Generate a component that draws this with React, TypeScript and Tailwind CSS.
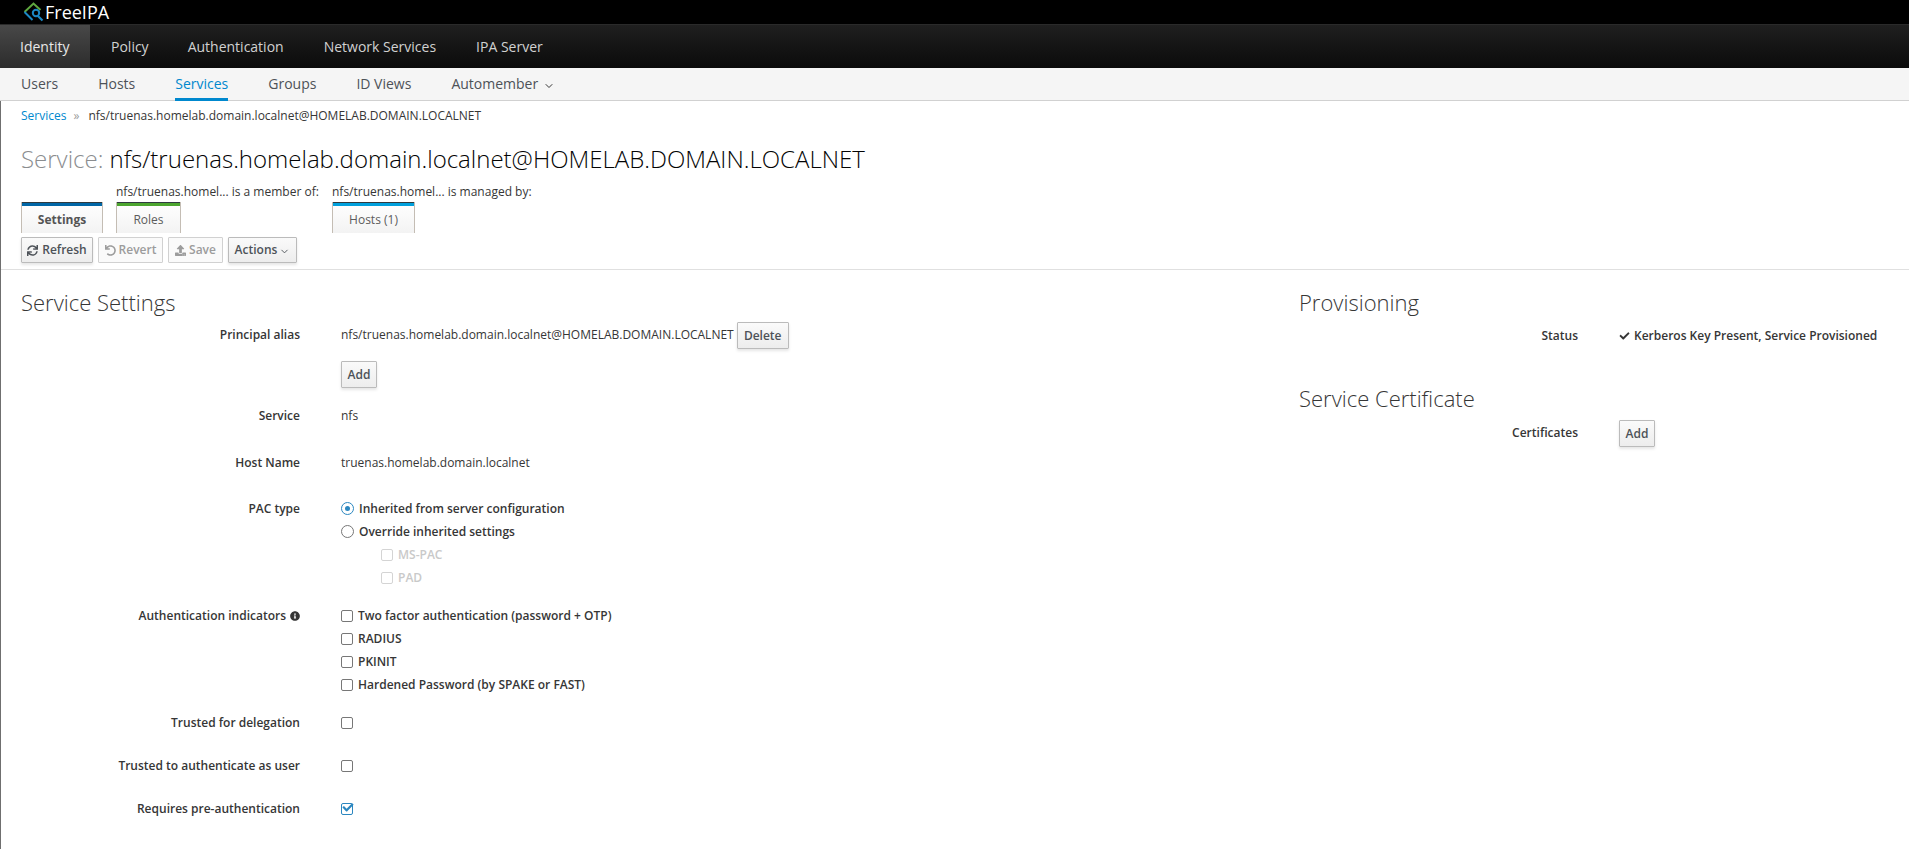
import React from 'react';
import { ChevronDown } from 'lucide-react';
import { FaCheck, FaInfoCircle, FaSync, FaUndo, FaUpload } from 'react-icons/fa';

const Logo = () => (
  <svg width="23" height="20" viewBox="0 0 23 20" fill="none" className="shrink-0">
    <path d="M1.5 10 L10.5 1.5 L17.5 8" stroke="#5fa83f" strokeWidth="2" />
    <path d="M1.5 10 L9.5 18" stroke="#1b87c4" strokeWidth="2" />
    <circle cx="13" cy="11" r="3.2" stroke="#1b87c4" strokeWidth="2" />
    <path d="M14.5 13.5 L19.5 18.5" stroke="#1b87c4" strokeWidth="2.2" />
  </svg>
);

const Btn = ({ children, disabled, className = '' }: { children: React.ReactNode; disabled?: boolean; className?: string }) => (
  <div
    className={`flex items-center justify-center rounded-[1px] border text-xs font-semibold ${
      disabled
        ? 'border-[#d1d1d1] bg-[#fafafa] text-[#9c9c9c]'
        : 'border-[#bbbbbb] bg-gradient-to-b from-[#fafafa] to-[#ededed] text-[#4d5258] shadow-[0_2px_3px_rgba(3,3,3,0.1)]'
    } ${className}`}
  >
    {children}
  </div>
);

const Tab = ({ label, bar, bold, className = '' }: { label: string; bar: string; bold?: boolean; className?: string }) => (
  <div className={`flex h-[31px] flex-col border-x border-[#c4bdb4] bg-gradient-to-b from-white to-[#f3f3f3] ${className}`}>
    <div className={`h-1 border-t border-[#2f3a3f] ${bar}`} />
    <div className={`flex flex-1 items-center justify-center text-xs ${bold ? 'font-bold text-[#545454]' : 'text-[#5c5c5c]'}`}>{label}</div>
  </div>
);

const Row = ({ label, children, className = '' }: { label: React.ReactNode; children: React.ReactNode; className?: string }) => (
  <div className={`flex items-start ${className}`}>
    <div className="w-[279px] shrink-0 pt-[4px] text-right text-xs font-semibold leading-[18px] text-[#363636]">{label}</div>
    <div className="ml-[41px] min-w-0">{children}</div>
  </div>
);

const Box = ({ faded }: { faded?: boolean }) => (
  <span className={`box-border block h-3 w-3 shrink-0 rounded-[2px] border ${faded ? 'border-[#d4d4d4]' : 'border-[#777777]'}`} />
);

const CheckLine = ({ label, faded }: { label: string; faded?: boolean }) => (
  <div className={`flex h-[23px] items-center gap-[5px] text-xs font-semibold ${faded ? 'text-[#c9c9c9]' : 'text-[#363636]'}`}>
    <Box faded={faded} />
    {label}
  </div>
);

const Radio = ({ label, on }: { label: string; on?: boolean }) => (
  <div className="flex h-[23px] items-center gap-[5px] text-xs font-semibold text-[#363636]">
    <span className={`flex h-[13px] w-[13px] items-center justify-center rounded-full border ${on ? 'border-[#2b87c0]' : 'border-[#777777]'}`}>
      {on && <span className="h-[5px] w-[5px] rounded-full bg-[#2b87c0]" />}
    </span>
    {label}
  </div>
);

const topNav = [
  { label: 'Identity', cls: 'w-[90px] px-5 bg-gradient-to-b from-[#484848] to-[#2c2c2c] text-[#e8e8e8]' },
  { label: 'Policy', cls: 'pl-[21px] pr-[19px] text-[#d1d1d1]' },
  { label: 'Authentication', cls: 'px-5 text-[#d1d1d1]' },
  { label: 'Network Services', cls: 'px-5 text-[#d1d1d1]' },
  { label: 'IPA Server', cls: 'px-5 text-[#d1d1d1]' },
];
const subNav = ['Users', 'Hosts', 'Services', 'Groups', 'ID Views'];

export default function App() {
  return (
    <div className="h-[849px] w-full overflow-hidden bg-white font-['Open_Sans',sans-serif] text-[#363636]">
      <div className="flex h-6 items-center bg-black pl-[23px]">
        <Logo />
        <span className="-ml-px text-[18px] leading-none text-white">FreeIPA</span>
      </div>

      <div className="flex h-11 border-t border-[#2a2a2a] bg-gradient-to-b from-[#1f1f1f] to-[#0b0b0b] text-sm">
        {topNav.map((item) => (
          <div key={item.label} className={`flex items-center ${item.cls}`}>
            {item.label}
          </div>
        ))}
      </div>

      <div className="flex h-[33px] border-b border-[#d1d1d1] bg-[#f5f5f5] pl-px text-sm text-[#4d5258]">
        {subNav.map((item) => (
          <div
            key={item}
            className={`flex items-center px-5 ${item === 'Services' ? 'relative text-[#0088ce]' : ''}`}
          >
            {item}
            {item === 'Services' && <span className="absolute inset-x-5 -bottom-px h-[3px] bg-[#0088ce]" />}
          </div>
        ))}
        <div className="flex items-center gap-[5px] px-5">
          Automember
          <ChevronDown className="mt-[3px] h-3 w-3 text-[#363636]" strokeWidth={2} />
        </div>
      </div>

      <div className="h-[748px] border-l border-[#6f6f6f]">
        <div className="flex h-[29px] items-center pl-5 text-xs">
          <span className="text-[#0088ce]">Services</span>
          <span className="ml-[7px] text-[#9c9c9c]">»</span>
          <span className="ml-[9px] text-[#363636]">nfs/truenas.homelab.domain.localnet@HOMELAB.DOMAIN.LOCALNET</span>
        </div>

        <div className="mt-[13px] h-8 pl-5 text-2xl font-light leading-8 text-[#030303]">
          <span className="text-[#8b8d8f]">Service:</span> nfs/truenas.homelab.domain.localnet@HOMELAB.DOMAIN.LOCALNET
        </div>

        <div className="mt-[9px] flex h-[49px] pl-5 text-xs text-[#363636]">
          <div className="flex w-[95px] flex-col justify-end">
            <Tab label="Settings" bar="bg-[#0066a6]" bold className="w-[82px]" />
          </div>
          <div className="w-[216px]">
            <div className="h-[18px] leading-4">nfs/truenas.homel... is a member of:</div>
            <Tab label="Roles" bar="bg-[#4ca52f]" className="w-[65px]" />
          </div>
          <div>
            <div className="h-[18px] leading-4">nfs/truenas.homel... is managed by:</div>
            <Tab label="Hosts (1)" bar="bg-[#00a0dc]" className="w-[83px]" />
          </div>
        </div>

        <div className="mt-[4px] flex h-[26px] gap-[5px] pl-5">
          <Btn className="w-[72px] gap-[4px]"><FaSync className="h-[11px] w-[11px]" />Refresh</Btn>
          <Btn disabled className="w-[65px] gap-[3px]"><FaUndo className="h-[11px] w-[11px]" />Revert</Btn>
          <Btn disabled className="w-[55px] gap-[3px]"><FaUpload className="h-[11px] w-[11px]" />Save</Btn>
          <Btn className="w-[69px] gap-[2px]">Actions<ChevronDown className="mt-[2px] h-[11px] w-[11px]" strokeWidth={2} /></Btn>
        </div>

        <div className="mt-[6px] flex border-t border-[#e0e0e0]">
          <div className="w-[1298px] shrink-0 pl-5">
            <h2 className="mt-[18px] h-[28px] text-[22px] font-light leading-[28px] text-[#363636]">Service Settings</h2>
            <Row label="Principal alias" className="mt-[6px] h-[39px]">
              <div className="flex items-start">
                <span className="pt-[4px] text-xs leading-[18px]">nfs/truenas.homelab.domain.localnet@HOMELAB.DOMAIN.LOCALNET</span>
                <Btn className="ml-[3px] h-[27px] w-[52px]">Delete</Btn>
              </div>
            </Row>
            <div className="ml-[320px] h-[42px]">
              <Btn className="h-[27px] w-[36px]">Add</Btn>
            </div>
            <Row label="Service" className="h-[47px]"><div className="pt-[4px] text-xs leading-[18px]">nfs</div></Row>
            <Row label="Host Name" className="h-[46px]"><div className="pt-[4px] text-xs leading-[18px]">truenas.homelab.domain.localnet</div></Row>
            <Row label="PAC type" className="h-[107px]">
              <div className="pt-[1px]">
                <Radio label="Inherited from server configuration" on />
                <Radio label="Override inherited settings" />
                <div className="pl-[40px]">
                  <CheckLine label="MS-PAC" faded />
                  <CheckLine label="PAD" faded />
                </div>
              </div>
            </Row>
            <Row
              label={<span className="inline-flex items-center gap-[4px]">Authentication indicators <FaInfoCircle className="h-[10px] w-[10px] text-[#363636]" /></span>}
              className="h-[107px]"
            >
              <div className="pt-[1px]">
                <CheckLine label="Two factor authentication (password + OTP)" />
                <CheckLine label="RADIUS" />
                <CheckLine label="PKINIT" />
                <CheckLine label="Hardened Password (by SPAKE or FAST)" />
              </div>
            </Row>
            <Row label="Trusted for delegation" className="h-[43px]"><div className="pt-[7px]"><Box /></div></Row>
            <Row label="Trusted to authenticate as user" className="h-[43px]"><div className="pt-[7px]"><Box /></div></Row>
            <Row label="Requires pre-authentication">
              <div className="relative pt-[7px]">
                <span className="block h-3 w-3 rounded-[2px] border border-[#2b87c0]" />
                <FaCheck className="absolute left-[1px] top-[6px] h-[11px] w-3 text-[#2b87c0]" />
              </div>
            </Row>
          </div>

          <div className="flex-1">
            <h2 className="mt-[18px] h-[28px] text-[22px] font-light leading-[28px] text-[#363636]">Provisioning</h2>
            <Row label="Status" className="mt-[7px]">
              <div className="flex items-center gap-1 pt-[4px] text-xs font-semibold leading-[18px]">
                <FaCheck className="h-[10px] w-[11px]" />
                Kerberos Key Present, Service Provisioned
              </div>
            </Row>
            <h2 className="mt-[39px] h-[28px] text-[22px] font-light leading-[28px] text-[#363636]">Service Certificate</h2>
            <Row label="Certificates" className="mt-[8px]">
              <Btn className="h-[27px] w-[36px]">Add</Btn>
            </Row>
          </div>
        </div>
      </div>
    </div>
  );
}
